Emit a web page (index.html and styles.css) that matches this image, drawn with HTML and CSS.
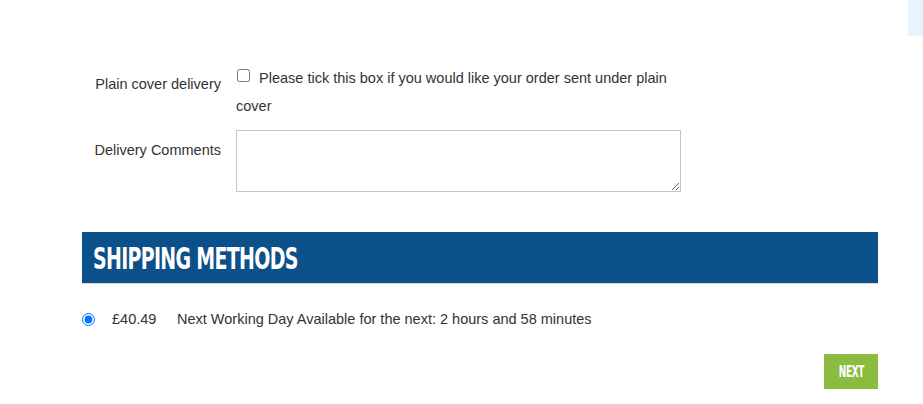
FILE: index.html
```html
<!DOCTYPE html>
<html lang="en">

<head>
    <meta charset="UTF-8">
    <meta name="viewport" content="width=device-width, initial-scale=1.0">
    <title>Checkout - Delivery</title>
    <link rel="stylesheet" href="styles.css">
</head>

<body>
    <div class="corner-tab"></div>
    <div class="page">
        <!-- Delivery options -->
        <div class="form-row">
            <label class="form-label" for="plain-cover">Plain cover delivery</label>
            <div class="form-field plain-cover">
                <input type="checkbox" id="plain-cover"> Please tick this box if you would like your order sent under plain cover
            </div>
        </div>
        <div class="form-row">
            <label class="form-label" for="comments">Delivery Comments</label>
            <div class="form-field">
                <textarea id="comments" class="comments"></textarea>
            </div>
        </div>

        <!-- Shipping -->
        <h2 class="section-title"><span>Shipping Methods</span></h2>
        <div class="ship-option">
            <input type="radio" name="shipping" id="next-day" checked>
            <span class="ship-price">£40.49</span>
            <label class="ship-name" for="next-day">Next Working Day Available for the next: 2 hours and 58 minutes</label>
        </div>

        <div class="actions">
            <button class="btn-next"><span>Next</span></button>
        </div>
    </div>
</body>

</html>
```

FILE: styles.css
```css
* {
    margin: 0;
    padding: 0;
    box-sizing: border-box;
}

body {
    font-family: 'Liberation Sans', Arial, sans-serif;
    font-size: 14.5px;
    color: #333;
    background: #fff;
}

.corner-tab {
    position: absolute;
    top: 0;
    right: 0;
    width: 15px;
    height: 36px;
    background: #e7f4fb;
}

.page {
    padding: 64px 45px 0 82px;
}

.form-row {
    display: grid;
    grid-template-columns: 154px 445px;
    margin-bottom: 10px;
}

.form-label {
    text-align: right;
    padding: 10px 15px 0 0;
    line-height: 20px;
}

.plain-cover {
    line-height: 28px;
}

.plain-cover input {
    width: 13px;
    height: 13px;
    margin: 0 5px 0 1px;
    vertical-align: 1px;
}

.comments {
    display: block;
    width: 445px;
    height: 62px;
    border: 1px solid #c6c6c6;
    resize: vertical;
    font-family: inherit;
}

.section-title {
    margin-top: 40px;
    height: 52px;
    background: #0c508a;
    border-bottom: 1px solid #d4d8dc;
    padding-left: 11px;
    color: #fff;
    overflow: hidden;
}

.section-title span {
    display: inline-block;
    font-family: 'DejaVu Sans Condensed', 'DejaVu Sans', sans-serif;
    font-weight: bold;
    font-size: 31px;
    line-height: 52px;
    text-transform: uppercase;
    letter-spacing: -1px;
    transform: scaleX(0.68);
    transform-origin: left center;
}

.ship-option {
    display: flex;
    align-items: center;
    margin-top: 25px;
    line-height: 20px;
}

.ship-option input {
    width: 13px;
    height: 13px;
    margin: 0;
}

.ship-price {
    margin-left: 17px;
    width: 65px;
}

.actions {
    display: flex;
    justify-content: flex-end;
    margin-top: 25px;
}

.btn-next {
    width: 54px;
    height: 35px;
    border: none;
    background: #8bbb3f;
    color: #fff;
    cursor: pointer;
}

.btn-next span {
    display: inline-block;
    font-family: 'DejaVu Sans Condensed', 'DejaVu Sans', sans-serif;
    font-weight: bold;
    font-size: 16px;
    text-transform: uppercase;
    letter-spacing: -0.5px;
    transform: scaleX(0.62);
}
```
